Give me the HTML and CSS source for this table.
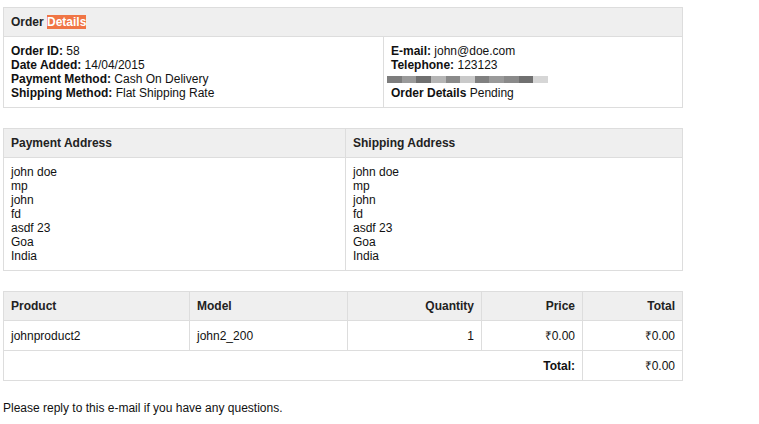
FILE: index.html
```html
<!DOCTYPE html>
<html>
<head>
	<title>Order Details</title>
	<meta charset="utf-8">
	<link rel="stylesheet" href="styles.css">
</head>
<body>
	<table class="info">
		<thead>
			<tr>
				<td class="head" colspan="2">Order <span class="mark">Details</span></td>
			</tr>
		</thead>
		<tbody>
			<tr>
				<td class="col-left">
					<b>Order ID:</b> 58<br>
					<b>Date Added:</b> 14/04/2015<br>
					<b>Payment Method:</b> Cash On Delivery<br>
					<b>Shipping Method:</b> Flat Shipping Rate
				</td>
				<td class="col-right">
					<b>E-mail:</b> john@doe.com<br>
					<b>Telephone:</b> 123123<br>
					<div class="blur">
						<span class="b1"></span><span class="b2"></span><span class="b3"></span><span class="b4"></span><span class="b5"></span><span class="b6"></span><span class="b7"></span><span class="b2"></span><span class="b5"></span><span class="b3"></span><span class="b8"></span>
					</div>
					<b>Order Details</b> Pending
				</td>
			</tr>
		</tbody>
	</table>

	<table class="address">
		<thead>
			<tr>
				<td class="head half">Payment Address</td>
				<td class="head">Shipping Address</td>
			</tr>
		</thead>
		<tbody>
			<tr>
				<td>john doe<br>mp<br>john<br>fd<br>asdf 23<br>Goa<br>India</td>
				<td>john doe<br>mp<br>john<br>fd<br>asdf 23<br>Goa<br>India</td>
			</tr>
		</tbody>
	</table>

	<table class="products">
		<thead>
			<tr>
				<td class="head c-product">Product</td>
				<td class="head c-model">Model</td>
				<td class="head right c-qty">Quantity</td>
				<td class="head right c-price">Price</td>
				<td class="head right">Total</td>
			</tr>
		</thead>
		<tbody>
			<tr>
				<td>johnproduct2</td>
				<td>john2_200</td>
				<td class="right">1</td>
				<td class="right">₹0.00</td>
				<td class="right">₹0.00</td>
			</tr>
		</tbody>
		<tfoot>
			<tr>
				<td class="right" colspan="4"><b>Total:</b></td>
				<td class="right">₹0.00</td>
			</tr>
		</tfoot>
	</table>

	<p class="note">Please reply to this e-mail if you have any questions.</p>
</body>
</html>
```

FILE: styles.css
```css
* {
	margin: 0px;
	padding: 0px;
}
body {
	padding: 7px 3px;
	font-family: "Liberation Sans", Arial, sans-serif;
	font-size: 12px;
	line-height: 14px;
	color: #111111;
	background-color: #ffffff;
}
table {
	border-collapse: collapse;
	width: 680px;
	border-top: 1px solid #DDDDDD;
	border-left: 1px solid #DDDDDD;
	margin-bottom: 20px;
}
td {
	padding: 7px;
	border-right: 1px solid #DDDDDD;
	border-bottom: 1px solid #DDDDDD;
	text-align: left;
	vertical-align: top;
}
td.head {
	background-color: #EFEFEF;
	font-weight: bold;
	color: #222222;
}
.products tbody td,
.products tfoot td {
	line-height: 15px;
	padding-top: 8px;
	padding-bottom: 6px;
}
.right {
	text-align: right !important;
}
.mark {
	background-color: #F07545;
	color: #ffffff;
}
.col-left {
	width: 365px;
}
.half {
	width: 327px;
}
.c-product {
	width: 171px;
}
.c-model {
	width: 143px;
}
.c-qty {
	width: 119px;
}
.c-price {
	width: 86px;
}
.blur {
	display: flex;
	height: 7px;
	margin: 4px 0px 3px -4px;
	width: 161px;
}
.blur span {
	flex: 1;
}
.b1 { background: #7d7d7d; }
.b2 { background: #9a9a9a; }
.b3 { background: #707070; }
.b4 { background: #b5b5b5; }
.b5 { background: #8a8a8a; }
.b6 { background: #c9c9c9; }
.b7 { background: #808080; }
.b8 { background: #d6d6d6; }
.note {
	margin: 0px;
}
```
